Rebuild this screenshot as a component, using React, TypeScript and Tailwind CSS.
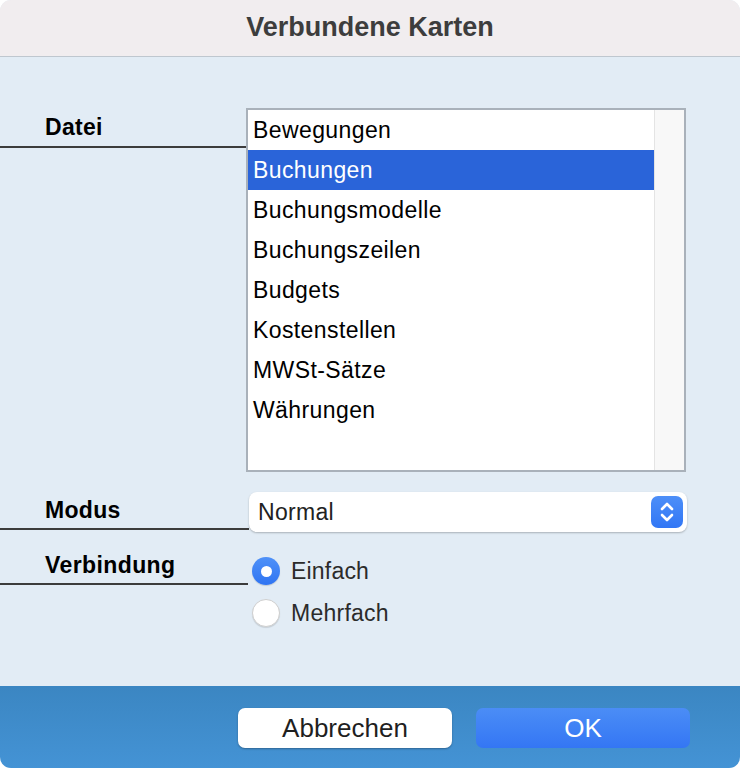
import React from "react";

const items = [
  "Bewegungen",
  "Buchungen",
  "Buchungsmodelle",
  "Buchungszeilen",
  "Budgets",
  "Kostenstellen",
  "MWSt-Sätze",
  "Währungen",
];

export default function App() {
  return (
    <div
      className="w-[740px] h-[768px] bg-white"
      style={{ fontFamily: '"Liberation Sans", Arial, sans-serif' }}
    >
      <div className="w-[740px] h-[768px] rounded-[11px] overflow-hidden flex flex-col bg-[#e2ecf5]">
        {/* Title bar */}
        <div className="h-[57px] shrink-0 border-b border-[#bfc7cf] bg-[#f1edef] flex items-center justify-center">
          <span className="text-[27px] font-bold text-[#3d3d3d] leading-none -mt-[2px]">Verbundene Karten</span>
        </div>

        {/* Body */}
        <div className="flex-1 flex flex-col pt-[51px]">
          {/* Datei row */}
          <div className="flex items-start">
            <div className="w-[246px] h-[40px] border-b-2 border-[#3c3c3c] pl-[45px] flex items-center text-[23px] tracking-[0.3px] font-bold text-black">
              Datei
            </div>
            <div className="w-[440px] h-[364px] border-2 border-[#a9b1ba] bg-white flex">
              <div className="w-[406px] flex flex-col">
                {items.map((it) => (
                  <div
                    key={it}
                    className={
                      it === "Buchungen"
                        ? "h-[40px] pl-[5px] flex items-center text-[23px] tracking-[0.4px] bg-[#2a64d9] text-white"
                        : "h-[40px] pl-[5px] flex items-center text-[23px] tracking-[0.4px] text-black"
                    }
                  >
                    {it}
                  </div>
                ))}
              </div>
              <div className="w-[30px] bg-[#f8f8f8] border-l border-[#e4e4e4]" />
            </div>
          </div>

          {/* Modus row */}
          <div className="flex items-start mt-[20px]">
            <div className="w-[249px] h-[38px] border-b-2 border-[#3c3c3c] pl-[45px] flex items-center text-[23px] tracking-[0.3px] font-bold text-black">
              Modus
            </div>
            <div className="w-[438px] h-[40px] bg-white rounded-[8px] shadow-[0_1px_2px_rgba(0,0,0,0.25)] flex items-center justify-between pl-[9px] pr-[4px]">
              <span className="text-[23px] tracking-[0.3px] text-[#222]">Normal</span>
              <div className="w-[32px] h-[32px] rounded-[7px] bg-gradient-to-b from-[#4d8ff8] to-[#3176f5] flex items-center justify-center">
                <svg width="32" height="32" viewBox="0 0 32 32" fill="none">
                  <path d="M11 13 L16 8 L21 13" stroke="white" strokeWidth="2.6" strokeLinecap="round" strokeLinejoin="round" />
                  <path d="M11 19 L16 24 L21 19" stroke="white" strokeWidth="2.6" strokeLinecap="round" strokeLinejoin="round" />
                </svg>
              </div>
            </div>
          </div>

          {/* Verbindung row */}
          <div className="flex items-start mt-[15px]">
            <div className="w-[248px] h-[38px] border-b-2 border-[#3c3c3c] pl-[45px] flex items-center text-[23px] tracking-[0.4px] font-bold text-black">
              Verbindung
            </div>
            <div className="flex flex-col gap-[14px] pt-[10px] pl-[4px]">
              <div className="flex items-center h-[28px] gap-[11px]">
                <div className="w-[28px] h-[28px] rounded-full bg-gradient-to-b from-[#4f91f8] to-[#2f74f2] flex items-center justify-center shadow-[0_1px_1px_rgba(0,0,0,0.15)]">
                  <div className="w-[11px] h-[11px] rounded-full bg-white" />
                </div>
                <span className="text-[23px] tracking-[0.2px] text-[#2b2b2b]">Einfach</span>
              </div>
              <div className="flex items-center h-[28px] gap-[11px]">
                <div className="w-[28px] h-[28px] rounded-full bg-white border border-[#cfcfcf] shadow-[0_1px_1px_rgba(0,0,0,0.12)]" />
                <span className="text-[23px] tracking-[0.25px] text-[#2b2b2b]">Mehrfach</span>
              </div>
            </div>
          </div>
        </div>

        {/* Footer */}
        <div className="h-[82px] shrink-0 bg-gradient-to-b from-[#3b86c2] to-[#4493d5] flex items-start justify-end pt-[22px] pr-[50px] gap-[24px]">
          <div className="w-[214px] h-[40px] rounded-[7px] bg-white shadow-[0_1px_2px_rgba(0,0,0,0.3)] flex items-center justify-center text-[26px] text-[#1f1f1f]">
            Abbrechen
          </div>
          <div className="w-[214px] h-[40px] rounded-[7px] bg-gradient-to-b from-[#4b8df6] to-[#3476f4] flex items-center justify-center text-[26px] text-white">
            OK
          </div>
        </div>
      </div>
    </div>
  );
}
